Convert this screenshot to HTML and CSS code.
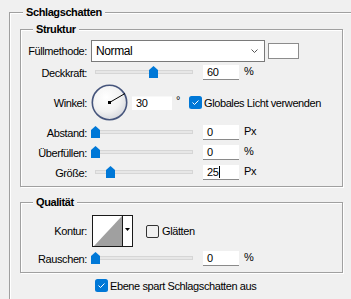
FILE: index.html
```html
<!DOCTYPE html>
<html lang="de">
<head>
  <meta charset="UTF-8" />
  <meta name="viewport" content="width=device-width, initial-scale=1.0"/>
  <title>Schlagschatten</title>
  <link rel="stylesheet" href="styles.css">
</head>
<body>
  <div class="group outer">
    <div class="group-title">Schlagschatten</div>

    <div class="group inner struktur">
      <div class="group-title">Struktur</div>

      <div class="row row-blend">
        <span class="label">Füllmethode:</span>
        <div class="select">
          <span>Normal</span>
          <svg class="chevron" width="7" height="4" viewBox="0 0 7 4"><polyline points="0.5,0.5 3.5,3.5 6.5,0.5" fill="none" stroke="#555" stroke-width="1"/></svg>
        </div>
        <div class="swatch"></div>
      </div>

      <div class="row row-field">
        <span class="label">Deckkraft:</span>
        <div class="slider"><div class="track"></div><svg class="thumb" style="left:58px" width="9" height="12" viewBox="0 0 9 12"><polygon points="0,4 4.5,0 9,4 9,12 0,12" fill="#0078d7"/></svg></div>
        <div class="field">60</div>
        <span class="unit">%</span>
      </div>

      <div class="row row-angle">
        <span class="label">Winkel:</span>
        <svg class="dial" width="37" height="37" viewBox="0 0 37 37">
          <defs>
            <radialGradient id="dialFill" cx="0.4" cy="0.35" r="0.7">
              <stop offset="0" stop-color="#ffffff"/>
              <stop offset="0.6" stop-color="#f2f2f2"/>
              <stop offset="1" stop-color="#d4d6dc"/>
            </radialGradient>
          </defs>
          <circle cx="18.5" cy="18.5" r="17.2" fill="url(#dialFill)" stroke="#46557c" stroke-width="1.6"/>
          <line x1="18.5" y1="18.5" x2="34" y2="9.5" stroke="#000" stroke-width="1"/>
          <rect x="17" y="17" width="3" height="3" fill="#000"/>
        </svg>
        <div class="field field-angle">30</div>
        <span class="deg">°</span>
        <label class="check check-light">
          <svg class="box" width="13" height="13" viewBox="0 0 13 13"><rect width="13" height="13" rx="2.5" fill="#0078d7"/><polyline points="3.5,6.5 5.5,8.5 9.5,4.5" fill="none" stroke="#fff" stroke-width="1"/></svg>
          <span>Globales Licht verwenden</span>
        </label>
      </div>

      <div class="row row-field">
        <span class="label">Abstand:</span>
        <div class="slider"><div class="track"></div><svg class="thumb" style="left:0px" width="9" height="12" viewBox="0 0 9 12"><polygon points="0,4 4.5,0 9,4 9,12 0,12" fill="#0078d7"/></svg></div>
        <div class="field">0</div>
        <span class="unit">Px</span>
      </div>

      <div class="row row-field row-loose">
        <span class="label">Überfüllen:</span>
        <div class="slider"><div class="track"></div><svg class="thumb" style="left:0px" width="9" height="12" viewBox="0 0 9 12"><polygon points="0,4 4.5,0 9,4 9,12 0,12" fill="#0078d7"/></svg></div>
        <div class="field">0</div>
        <span class="unit">%</span>
      </div>

      <div class="row row-field row-loose">
        <span class="label">Größe:</span>
        <div class="slider"><div class="track"></div><svg class="thumb" style="left:15px" width="9" height="12" viewBox="0 0 9 12"><polygon points="0,4 4.5,0 9,4 9,12 0,12" fill="#0078d7"/></svg></div>
        <div class="field">25<span class="caret"></span></div>
        <span class="unit">Px</span>
      </div>
    </div>

    <div class="group inner qualitaet">
      <div class="group-title">Qualität</div>

      <div class="row row-contour">
        <span class="label">Kontur:</span>
        <div class="contour">
          <svg class="contour-preview" width="29" height="30" viewBox="0 0 29 30"><rect width="29" height="30" fill="#fff"/><polygon points="1,30 29,0 29,30" fill="#a0a0a0"/></svg>
          <div class="contour-arrow">
            <svg width="5" height="3" viewBox="0 0 5 3"><polygon points="0,0 5,0 2.5,3" fill="#000"/></svg>
          </div>
        </div>
        <label class="check check-smooth">
          <span class="box-empty"></span>
          <span>Glätten</span>
        </label>
      </div>

      <div class="row row-field">
        <span class="label">Rauschen:</span>
        <div class="slider"><div class="track"></div><svg class="thumb" style="left:0px" width="9" height="12" viewBox="0 0 9 12"><polygon points="0,4 4.5,0 9,4 9,12 0,12" fill="#0078d7"/></svg></div>
        <div class="field">0</div>
        <span class="unit">%</span>
      </div>
    </div>

    <label class="check check-layer">
      <svg class="box" width="13" height="13" viewBox="0 0 13 13"><rect width="13" height="13" rx="2.5" fill="#0078d7"/><polyline points="3.5,6.5 5.5,8.5 9.5,4.5" fill="none" stroke="#fff" stroke-width="1"/></svg>
      <span>Ebene spart Schlagschatten aus</span>
    </label>
  </div>
</body>
</html>
```

FILE: styles.css
```css
body {
  margin: 0;
  background-color: #f0f0f0;
  color: #000;
  font-family: "Liberation Sans", Arial, sans-serif;
  font-size: 11px;
  letter-spacing: -0.4px;
  overflow: hidden;
  height: 299px;
}

/* etched group boxes */
.group {
  border: 1px solid #a0a0a0;
  box-shadow: inset 1px 1px 0 #fff, 1px 1px 0 #fff;
}

.group-title {
  display: table;
  line-height: 14px;
  margin-top: -8px;
  padding: 0 3px;
  background-color: #f0f0f0;
  font-weight: bold;
}

.outer {
  margin: 12px 0 0 9px;
  width: 342px;
  height: 287px;
  box-sizing: border-box;
  padding-left: 10px;
  border-right: none;
  border-bottom: none;
  box-shadow: inset 1px 1px 0 #fff;
}

.outer > .group-title {
  margin-left: 3px;
}

.inner {
  width: 323px;
  box-sizing: border-box;
}

.inner > .group-title {
  margin-left: 12px;
}

.struktur {
  margin-top: 10px;
  padding-bottom: 6px;
}

.struktur > .group-title {
  margin-bottom: 4px;
}

.qualitaet {
  margin-top: 15px;
  padding-bottom: 6px;
}

.qualitaet > .group-title {
  margin-bottom: 6px;
}

/* rows */
.row {
  display: flex;
  align-items: center;
}

.label {
  width: 66px;
  flex-shrink: 0;
  text-align: right;
  margin-right: 4px;
}

.row-blend {
  height: 22px;
}

.row-field {
  height: 15px;
  margin-top: 4px;
}

.row-blend + .row-field {
  margin-top: 3px;
}

.row-loose {
  margin-top: 5px;
}

.row-angle {
  height: 37px;
  margin-top: 4px;
}

.row-contour {
  height: 32px;
}

/* dropdown */
.select {
  width: 174px;
  height: 22px;
  box-sizing: border-box;
  border: 1px solid #7a7a7a;
  background-color: #fff;
  display: flex;
  align-items: center;
  justify-content: space-between;
  padding: 0 6px 0 4px;
  font-size: 12px;
}

.swatch {
  width: 31px;
  height: 16px;
  box-sizing: border-box;
  margin-left: 3px;
  border: 1px solid #8c8c8c;
  background-color: #fff;
}

/* sliders */
.slider {
  position: relative;
  width: 106px;
  height: 15px;
  flex-shrink: 0;
}

.track {
  margin: 5px 4px 0;
  height: 4px;
  box-sizing: border-box;
  background-color: #e7e7e7;
  border: 1px solid #d6d6d6;
}

.thumb {
  position: absolute;
  top: 1px;
}

/* number fields */
.field {
  width: 36px;
  height: 15px;
  box-sizing: border-box;
  margin-left: 6px;
  padding-left: 4px;
  background-color: #fff;
  border-bottom: 1px solid #8a8a8a;
  line-height: 15px;
  display: flex;
  align-items: center;
}

.caret {
  width: 1px;
  height: 12px;
  background-color: #000;
  margin-left: 1px;
}

.unit {
  margin-left: 5px;
  margin-top: -3px;
}

/* angle */
.dial {
  flex-shrink: 0;
}

.field-angle {
  width: 40px;
  height: 14px;
  margin-left: 4px;
  border-bottom: none;
  border-top: 1px solid #f8f8f8;
}

.deg {
  margin-left: 4px;
  margin-top: -6px;
}

/* checkboxes */
.check {
  display: flex;
  align-items: center;
  white-space: nowrap;
}

.check .box,
.box-empty {
  flex-shrink: 0;
  margin-right: 2px;
}

.check-light {
  margin-left: 9px;
}

.box-empty {
  width: 13px;
  height: 13px;
  box-sizing: border-box;
  border: 1px solid #333;
  border-radius: 2px;
}

.check-smooth {
  margin-left: 13px;
}

.check-smooth .box-empty {
  margin-right: 3px;
}

.check-layer {
  margin: 6px 0 0 75px;
}

/* contour picker */
.contour {
  display: flex;
  width: 41px;
  height: 32px;
  box-sizing: border-box;
  margin-left: 1px;
  border: 1px solid #1a1a1a;
  background-color: #fff;
}

.contour-preview {
  display: block;
}

.contour-arrow {
  flex: 1;
  border-left: 1px solid #1a1a1a;
  display: flex;
  justify-content: center;
  padding-top: 12px;
  box-sizing: border-box;
}

.contour-arrow svg {
  display: block;
}
```
